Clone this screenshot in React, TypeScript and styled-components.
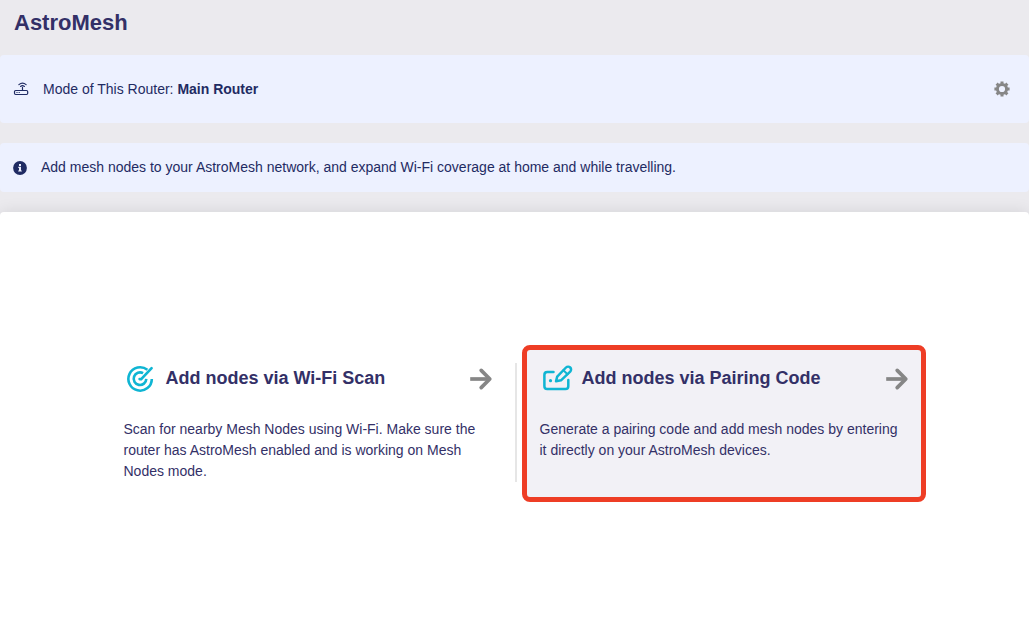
import React from "react";
import styled, { createGlobalStyle } from "styled-components";

const GlobalStyle = createGlobalStyle`
  * { box-sizing: border-box; }
  body {
    margin: 0;
    background: #ebeaee;
    font-family: Arial, "Liberation Sans", sans-serif;
    font-size: 14px;
    color: #1f2b63;
  }
  h1, h2, p { margin: 0; }
`;

const Page = styled.div`
  display: flex;
  flex-direction: column;
  height: 627px;
  overflow: hidden;
`;

const Title = styled.h1`
  height: 55px;
  padding: 10px 0 0 14px;
  font-size: 22px;
  line-height: 26px;
  color: #333067;
`;

const Banner = styled.section<{ $height: number }>`
  display: flex;
  flex: none;
  align-items: center;
  gap: 14px;
  height: ${(p) => p.$height}px;
  margin-bottom: 20px;
  padding: 0 19px 0 13px;
  border-radius: 4px;
  background: #edf1ff;
`;

const BannerText = styled.p`
  flex: 1;
  line-height: 20px;
`;

const InfoText = styled(BannerText)`
  padding-bottom: 1px;
`;

const IconButton = styled.button`
  display: flex;
  padding: 0;
  border: 0;
  background: none;
  color: #868686;
`;

const Panel = styled.main`
  display: flex;
  flex: 1;
  align-items: flex-start;
  gap: 5px;
  padding: 133px 0 0 106px;
  border-radius: 4px 4px 0 0;
  background: #fff;
  box-shadow: 0 0 16px rgba(0, 0, 0, 0.1);
`;

const Divider = styled.div`
  width: 2px;
  height: 119px;
  margin-top: 18px;
  background: #e6e6e6;
`;

const Card = styled.article<{ $active?: boolean }>`
  width: 404px;
  height: 157px;
  padding: 13px 11.5px 12px 12.5px;
  border: 5px solid ${(p) => (p.$active ? "#ee3d25" : "transparent")};
  border-radius: 8px;
  background: ${(p) => (p.$active ? "#f2f1f6" : "transparent")};
`;

const CardHead = styled.header`
  display: flex;
  align-items: center;
  height: 32px;
  color: #868686;
`;

const CardIcon = styled.span`
  display: flex;
  flex: none;
  width: 42px;
  color: #0fb5d3;
`;

const CardTitle = styled.h2`
  flex: 1;
  padding-bottom: 2px;
  font-size: 18px;
  line-height: 24px;
  color: #333067;
`;

const CardText = styled.p`
  margin-top: 24px;
  line-height: 21px;
  color: #333067;
  white-space: pre-line;
`;

const RouterIcon = () => (
  <svg width="16" height="14" viewBox="0 0 16 14" fill="none" stroke="currentColor" strokeWidth="1.2" strokeLinecap="round">
    <rect x="1.5" y="8.5" width="13.2" height="4" rx="1.2" />
    <path d="M9.5 8V5.4M5.9 2.6Q9.5-.4 13.1 2.6M7.6 4.4Q9.5 3 11.4 4.4" />
    <path d="M3.9 10.5h.2M6.1 10.5h.2" />
  </svg>
);

const InfoIcon = () => (
  <svg width="14" height="14" viewBox="0 0 14 14">
    <circle cx="7" cy="7" r="6.9" fill="currentColor" />
    <path d="M6 3h2v2H6zM5.3 5.8H8v3.6h.8v1.2H5.2V9.4H6V7h-.7z" fill="#edf1ff" />
  </svg>
);

const GearIcon = () => (
  <svg width="16" height="16" viewBox="0 0 16 16" fill="none" stroke="currentColor">
    <circle cx="8" cy="8" r="4.6" strokeWidth="3" />
    {[0, 45, 90, 135].map((angle) => (
      <path
        key={angle}
        d="M8 .4v2.3M8 13.3v2.3"
        strokeWidth="3"
        transform={`rotate(${angle} 8 8)`}
      />
    ))}
  </svg>
);

const ArrowIcon = () => (
  <svg width="24" height="24" viewBox="0 0 24 24" fill="none" stroke="currentColor" strokeWidth="3.7" strokeLinejoin="round">
    <path d="M.2 12h19" />
    <path d="M11.2 3.4L19.8 12L11.2 20.6" strokeLinecap="round" />
  </svg>
);

const TargetIcon = () => (
  <svg width="32" height="28" viewBox="0 0 32 28" fill="none" stroke="currentColor" strokeWidth="2.6" strokeLinecap="round">
    <path d="M23.4 4.8A11.7 11.7 0 1 0 27.8 13.9" strokeLinecap="butt" />
    <path d="M19.1 8.2A6.3 6.3 0 1 0 22.3 13.9" strokeLinecap="butt" />
    <path d="M15.6 14.1H17.2L27.6 3.1" />
  </svg>
);

const EditIcon = () => (
  <svg width="34" height="28" viewBox="0 0 34 28" fill="none" stroke="currentColor" strokeWidth="2.5" strokeLinejoin="round" strokeLinecap="round">
    <path d="M13.5 7.1H7.2Q4.4 7.1 4.4 9.9v11.4q0 2.8 2.8 2.8h18.3q2.8 0 2.8-2.8V15" />
    <path d="M16 16.3L17.2 11.6L26 2.5A2.9 2.9 0 0 1 30.2 6.7L21 15.3Z" />
    <path d="M23.4 5.3L27.5 9.2" strokeWidth="2" />
    <circle cx="10.5" cy="15.7" r="1.6" fill="currentColor" stroke="none" />
  </svg>
);

interface MethodProps {
  title: string;
  text: string;
  icon: React.ReactNode;
  active?: boolean;
}

const Method = ({ title, text, icon, active }: MethodProps) => (
  <Card $active={active}>
    <CardHead>
      <CardIcon>{icon}</CardIcon>
      <CardTitle>{title}</CardTitle>
      <ArrowIcon />
    </CardHead>
    <CardText>{text}</CardText>
  </Card>
);

export default function App() {
  return (
    <>
      <GlobalStyle />
      <Page>
        <Title>AstroMesh</Title>
        <Banner $height={68}>
          <RouterIcon />
          <BannerText>
            Mode of This Router: <strong>Main Router</strong>
          </BannerText>
          <IconButton aria-label="Settings">
            <GearIcon />
          </IconButton>
        </Banner>
        <Banner $height={49}>
          <InfoIcon />
          <InfoText>
            Add mesh nodes to your AstroMesh network, and expand Wi-Fi coverage at home and while travelling.
          </InfoText>
        </Banner>
        <Panel>
          <Method
            icon={<TargetIcon />}
            title="Add nodes via Wi-Fi Scan"
            text={"Scan for nearby Mesh Nodes using Wi-Fi. Make sure the\nrouter has AstroMesh enabled and is working on Mesh\nNodes mode."}
          />
          <Divider />
          <Method
            active
            icon={<EditIcon />}
            title="Add nodes via Pairing Code"
            text={"Generate a pairing code and add mesh nodes by entering\nit directly on your AstroMesh devices."}
          />
        </Panel>
      </Page>
    </>
  );
}
